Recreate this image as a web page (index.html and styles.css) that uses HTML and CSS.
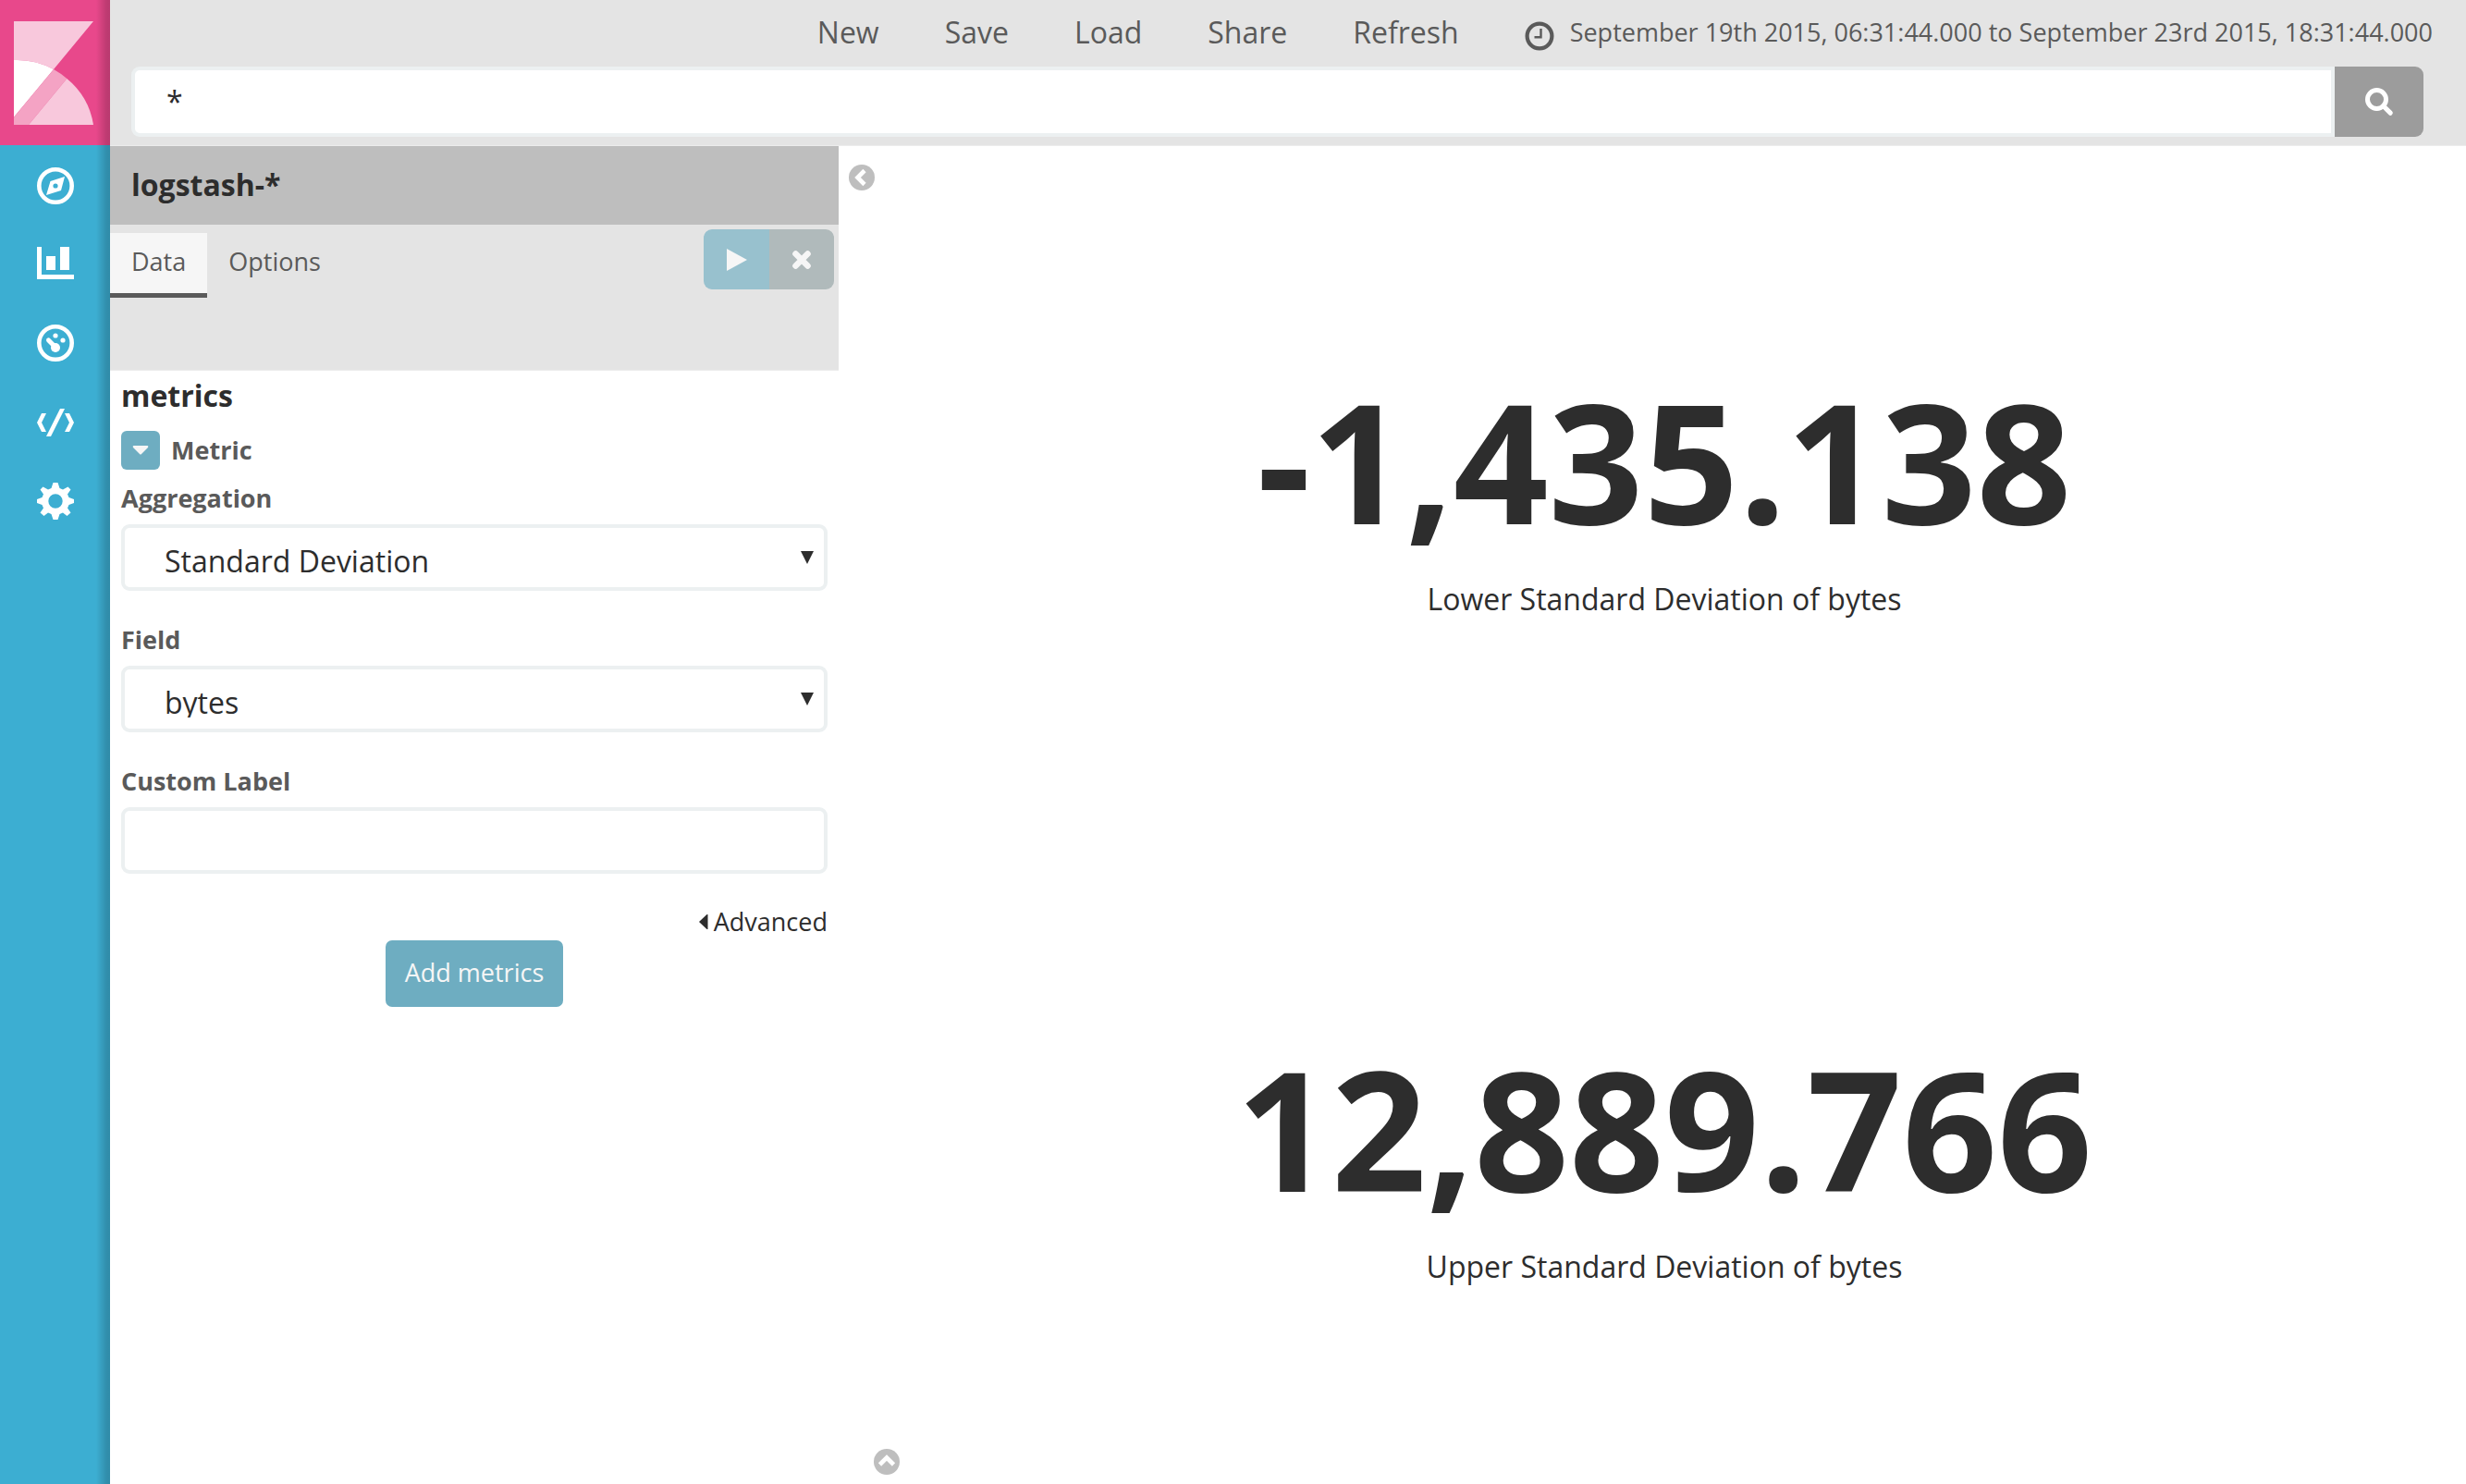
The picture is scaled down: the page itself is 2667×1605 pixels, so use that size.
FILE: index.html
```html
<!DOCTYPE html>
<html lang="en">
<head>
<meta charset="utf-8">
<title>Visualize - Kibana</title>
<link rel="stylesheet" href="styles.css">
</head>
<body>
<div class="app">
  <aside class="rail">
    <a class="brand" href="#" aria-label="Kibana">
      <svg class="brand-mark" viewBox="0 0 258 336" aria-hidden="true">
        <path fill="#f8c8dc" d="M0 0H258L129 156A243 243 0 0 0 0 126Z"/>
        <path fill="#fff" d="M0 126A243 243 0 0 1 129 156L0 311Z"/>
        <path fill="#f4a3c4" d="M129 156A243 243 0 0 1 172 186L48 336H0V311Z"/>
        <path fill="#f8c8dc" d="M172 186A243 243 0 0 1 258 336H48Z"/>
      </svg>
    </a>
    <nav class="rail-nav" aria-label="Applications">
      <a href="#" aria-label="Discover">
        <svg viewBox="0 0 40 40"><circle cx="20" cy="20" r="17.700" fill="none" stroke="#fff" stroke-width="4.600"/><path fill="#fff" fill-rule="evenodd" d="M30 10 26 25 10 30 14.500 15ZM20 17.400a2.600 2.600 0 1 0 0 5.200a2.600 2.600 0 1 0 0-5.200Z"/></svg>
      </a>
      <a href="#" aria-label="Visualize">
        <svg viewBox="0 0 40 40"><path fill="#fff" d="M0 1H5V31H40V36H0ZM10 11H20V26H10ZM25 1H35V26H25Z"/></svg>
      </a>
      <a href="#" aria-label="Dashboard">
        <svg viewBox="0 0 40 40"><circle cx="20" cy="20" r="17.700" fill="none" stroke="#fff" stroke-width="4.600"/><circle cx="20" cy="25" r="5" fill="#fff"/><circle cx="20" cy="12" r="2.600" fill="#fff"/><circle cx="28" cy="17" r="2.600" fill="#fff"/><path d="M12.500 17 20 24.500" stroke="#fff" stroke-width="5" stroke-linecap="round"/></svg>
      </a>
      <a href="#" aria-label="Dev Tools">
        <svg viewBox="0 0 40 40"><path fill="#fff" d="M5 11H10L5 21 10 31H5L0 21ZM35 11H30L35 21 30 31H35L40 21ZM25 6H30L15 36H10Z"/></svg>
      </a>
      <a href="#" aria-label="Settings">
        <svg viewBox="0 -1 40 40"><path fill="#fff" fill-rule="evenodd" d="M17.500 0H22.500L24.500 6 28 7.500 33.500 4.500 36.500 7.500 33 12.500 34.500 16 40 18V22L34.500 24 33 27.500 36.500 32.500 32.500 36 28 32.500 24.500 34 22.500 40H17.500L15.500 34 12 32.500 7.500 36 3.500 32.500 7 27.500 5.500 24 0 22V18L5.500 16 7 12.500 3.500 7.500 6.500 4.500 12 7.500 15.500 6ZM20 12.300a7.700 7.700 0 1 0 0 15.400a7.700 7.700 0 1 0 0-15.400Z"/></svg>
      </a>
    </nav>
  </aside>

  <div class="main">
    <header class="topbar">
      <nav class="menu" aria-label="Visualization actions">
        <a href="#">New</a>
        <a href="#">Save</a>
        <a href="#">Load</a>
        <a href="#">Share</a>
        <a href="#">Refresh</a>
        <a class="timepicker" href="#">
          <svg viewBox="0 0 32 32" aria-hidden="true"><circle cx="16" cy="16" r="13.400" fill="none" stroke="#5a5a5a" stroke-width="4.200"/><path d="M17.500 8V17.300H10.500" fill="none" stroke="#5a5a5a" stroke-width="2.400"/></svg>
          <span>September 19th 2015, 06:31:44.000 to September 23rd 2015, 18:31:44.000</span>
        </a>
      </nav>
      <form class="search">
        <input type="text" value="*" aria-label="Search query">
        <button type="button" aria-label="Search">
          <svg viewBox="0 0 30 30" aria-hidden="true"><circle cx="12.500" cy="12.500" r="10" fill="none" stroke="#fff" stroke-width="5"/><path d="M19.500 19.500 27.200 27.200" stroke="#fff" stroke-width="5.200" stroke-linecap="round"/></svg>
        </button>
      </form>
    </header>

    <div class="workspace">
      <section class="editor">
        <h1 class="index-pattern">logstash-*</h1>
        <div class="tabs">
          <a class="tab tab-active" href="#">Data</a>
          <a class="tab" href="#">Options</a>
          <div class="actions">
            <button class="apply" type="button" aria-label="Apply changes"><svg viewBox="0 0 24 24"><path fill="#f6f6f6" d="M1 0 23 12 1 24Z"/></svg></button>
            <button class="discard" type="button" aria-label="Discard changes"><svg viewBox="0 0 24 24"><path d="M5.500 5.500 18.500 18.500M18.500 5.500 5.500 18.500" stroke="#f6f6f6" stroke-width="6.600" stroke-linecap="round"/></svg></button>
          </div>
        </div>
        <form class="aggs">
          <h2>metrics</h2>
          <div class="agg-head">
            <button class="toggle" type="button" aria-label="Collapse metric"><svg viewBox="0 0 18 10"><path fill="#f6f6f6" d="M1.500 0H16.500Q18 .500 17 2L10 9Q9 10 8 9L1 2Q0 .500 1.500 0Z"/></svg></button>
            <span>Metric</span>
          </div>
          <div class="field">
            <label for="aggregation">Aggregation</label>
            <div class="select">
              <select id="aggregation"><option>Standard Deviation</option></select>
              <svg viewBox="0 0 14 14" aria-hidden="true"><path fill="#2d2d2d" d="M0 0H14L7 14Z"/></svg>
            </div>
          </div>
          <div class="field">
            <label for="agg-field">Field</label>
            <div class="select">
              <select id="agg-field"><option>bytes</option></select>
              <svg viewBox="0 0 14 14" aria-hidden="true"><path fill="#2d2d2d" d="M0 0H14L7 14Z"/></svg>
            </div>
          </div>
          <div class="field">
            <label for="custom-label">Custom Label</label>
            <input id="custom-label" type="text">
          </div>
          <a class="advanced" href="#"><svg viewBox="0 0 10 16" aria-hidden="true"><path fill="#2d2d2d" d="M9.500 0V16H8.500L0 8 8.500 0Z"/></svg>Advanced</a>
          <button class="add" type="button">Add metrics</button>
        </form>
      </section>

      <main class="vis">
        <button class="collapse collapse-side" type="button" aria-label="Collapse editor"><svg viewBox="0 0 28 28"><circle cx="14" cy="14" r="14" fill="#bebebe"/><path d="M17 6.500 9.500 14 17 21.500" fill="none" stroke="#fff" stroke-width="4.600"/></svg></button>
        <div class="metric"><strong>-1,435.138</strong><span>Lower Standard Deviation of bytes</span></div>
        <div class="metric"><strong>12,889.766</strong><span>Upper Standard Deviation of bytes</span></div>
        <button class="collapse collapse-bottom" type="button" aria-label="Show details"><svg viewBox="0 0 28 28"><circle cx="14" cy="14" r="14" fill="#bebebe"/><path d="M6.500 17 14 9.500 21.500 17" fill="none" stroke="#fff" stroke-width="4.600"/></svg></button>
      </main>
    </div>
  </div>
</div>
</body>
</html>
```

FILE: styles.css
```css
* { box-sizing: border-box; }

body {
  margin: 0;
  font-family: "Open Sans", "Noto Sans", sans-serif;
  font-size: 27px;
  line-height: 40px;
  color: #2d2d2d;
  background: #fff;
}

a { color: inherit; text-decoration: none; }
h1, h2 { margin: 0; font-size: 32px; line-height: 44px; font-weight: 700; }
svg { display: block; overflow: visible; }
button { font: inherit; border: 0; padding: 0; display: flex; align-items: center; justify-content: center; cursor: pointer; }
input, select { font: inherit; font-size: 32px; color: #2d2d2d; background: #fff; border: 4px solid #ecf0f1; border-radius: 9px; }

.app { display: flex; min-height: 100vh; }

/* Left navigation */
.rail {
  flex: 0 0 119px;
  background: linear-gradient(to right, transparent 104px, rgba(0, 0, 0, .18) 115px, rgba(0, 0, 0, .2)), #3caed2;
}
.brand {
  display: flex;
  height: 157px;
  padding: 23px 15px;
  background: linear-gradient(to right, transparent 104px, rgba(0, 0, 0, .18) 115px, rgba(0, 0, 0, .2)), #e8488b;
}
.brand-mark { width: 86px; height: 112px; }
.rail-nav { display: flex; flex-direction: column; padding-top: 1px; }
.rail-nav a { display: flex; height: 85px; padding-left: 40px; align-items: center; }
.rail-nav svg { width: 40px; height: 40px; }

.main { flex: 1; min-width: 0; display: flex; flex-direction: column; }

/* Top bar */
.topbar { padding-bottom: 9px; background: #e4e4e4; border-bottom: 1px solid #ececec; color: #5a5a5a; }
.menu { display: flex; justify-content: flex-end; align-items: center; gap: 71px; height: 72px; padding: 0 36px 2px 0; font-size: 32px; }
.timepicker { display: flex; align-items: center; gap: 17px; font-size: 27px; }
.timepicker svg { width: 32px; height: 32px; margin-top: 8px; }
.search { display: flex; height: 76px; margin: 0 46px 0 23px; }
.search input { flex: 1; min-width: 0; padding: 0 34px; border-radius: 9px 0 0 9px; }
.search button { width: 96px; background: #9c9c9c; border-radius: 0 9px 9px 0; }
.search svg { width: 30px; height: 30px; }

.workspace { flex: 1; display: flex; }

/* Visualization editor */
.editor { flex: 0 0 788px; }
.index-pattern { padding: 20px 23px 21px; background: #bebebe; }
.tabs { display: flex; align-items: flex-start; height: 158px; padding: 9px 5px 0 0; background: #e4e4e4; border-bottom: 1px solid #ececec; }
.tab { height: 70px; padding: 11px 23px; color: #5a5a5a; }
.tab-active { background: #f6f6f6; border-bottom: 5px solid #5a5a5a; }
.actions { display: flex; margin: -4px 0 0 auto; }
.actions button { width: 70px; height: 65px; }
.actions svg { width: 24px; height: 24px; }
.actions .apply { width: 71px; background: #98c1ce; border-radius: 9px 0 0 9px; }
.actions .discard { background: #b0babb; border-radius: 0 9px 9px 0; }

.aggs { display: flex; flex-direction: column; padding: 5px 12px; }
.agg-head { display: flex; align-items: center; gap: 12px; margin: 16px 0 10px; font-weight: 700; color: #5a5a5a; }
.toggle { width: 42px; height: 42px; background: #6eadc1; border-radius: 6px; }
.toggle svg { width: 18px; height: 10px; }
.field { display: flex; flex-direction: column; gap: 7px; margin-bottom: 32px; }
.field label { line-height: 42px; font-weight: 700; color: #5a5a5a; }
.field input, .field select { width: 100%; height: 72px; padding: 0 43px; }
.select { position: relative; }
.field select { appearance: none; padding: 16px 43px 12px; }
.select svg { position: absolute; right: 15px; top: 29px; width: 14px; height: 14px; }
.advanced { display: flex; align-items: center; gap: 6px; align-self: flex-end; }
.advanced svg { width: 10px; height: 16px; }
.add { align-self: center; height: 72px; padding: 0 21px 2px; color: #f6f6f6; background: #6eadc1; border-radius: 7px; }

/* Visualization */
.vis { position: relative; flex: 1; display: flex; flex-direction: column; padding: 0 0 3px 26px; }
.metric { flex: 1; display: flex; flex-direction: column; align-items: center; justify-content: center; font-size: 32px; line-height: 44px; }
.metric strong { font-size: 180px; line-height: 257px; }
.collapse { position: absolute; width: 28px; height: 28px; background: none; }
.collapse svg { width: 28px; height: 28px; }
.collapse-side { left: 11px; top: 20px; }
.collapse-bottom { left: 38px; bottom: 10px; }
```
